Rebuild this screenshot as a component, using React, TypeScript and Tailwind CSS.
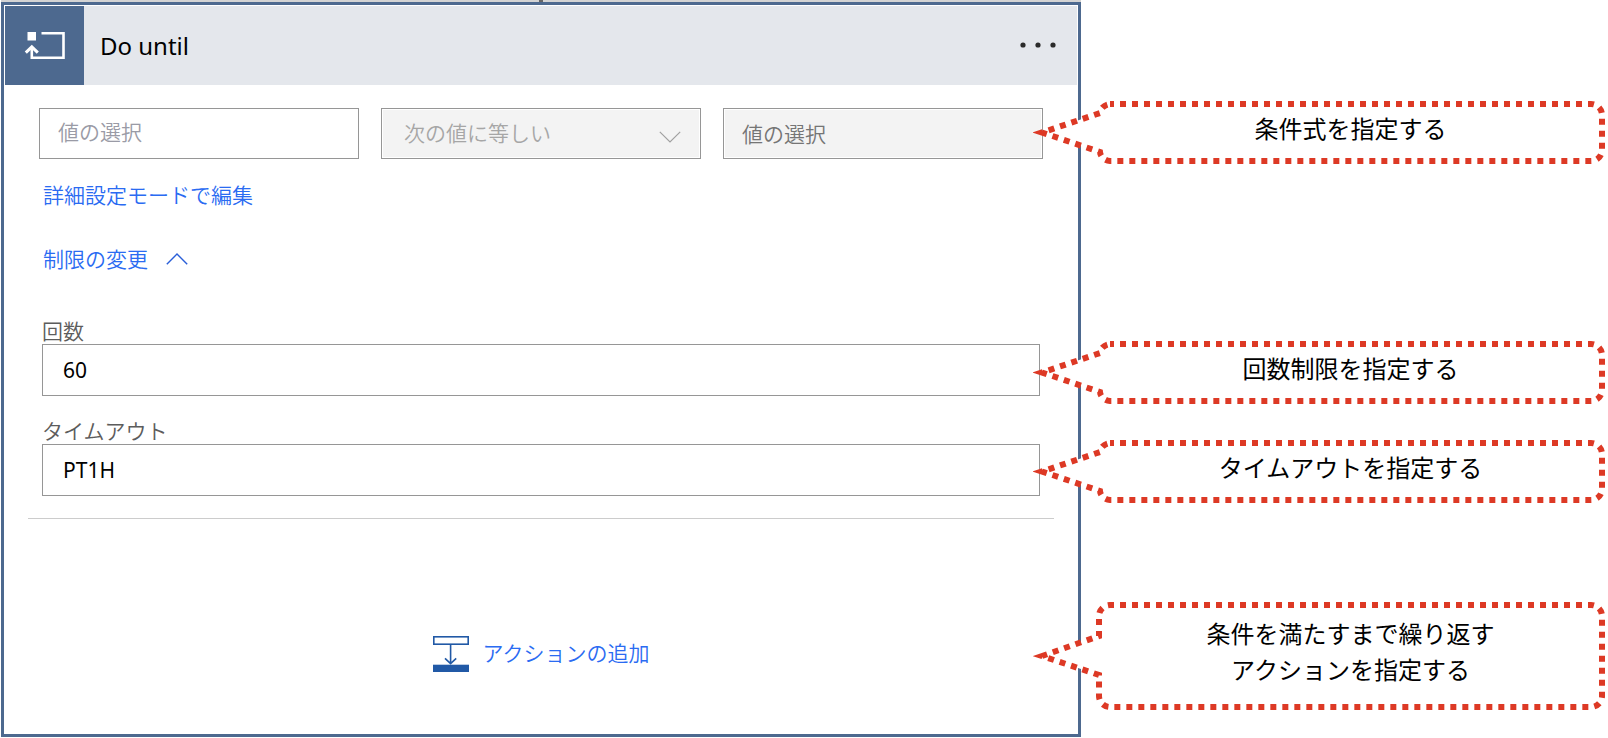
import {useState} from "react";
import type {ReactNode} from "react";
import clsx from "clsx";

type CalloutProps = {
    children: ReactNode;
    path: string;
    viewBox: string;
    className?: string;
};

const SMALL_BOX = "0 0 575 65";
const SMALL_PATH = "M77 4H558A11 11 0 0 1 569 15V50A11 11 0 0 1 558 61H77A11 10 0 0 1 67 52L9 32.5L67 13A11 10 0 0 1 77 4Z";
const LARGE_BOX = "0 0 575 110";
const LARGE_PATH = "M77 4H558A11 11 0 0 1 569 15V95A11 11 0 0 1 558 106H77A11 11 0 0 1 66 95V74L9 55L66 35V15A11 11 0 0 1 77 4Z";

function Callout({children, path, viewBox, className}: CalloutProps) {
    return (
        <div className={clsx("-ml-12 grid", className)}>
            <svg viewBox={viewBox} preserveAspectRatio="none" className="col-start-1 row-start-1 h-full w-full" aria-hidden="true">
                <path d={path} fill="#fff" stroke="#dd3925" strokeWidth="6" strokeDasharray="6 6" strokeDashoffset="2" strokeMiterlimit="10"/>
            </svg>
            <p className="col-start-1 row-start-1 self-center pr-1.5 pb-2 pl-[66px] text-center text-2xl leading-9 text-black">
                {children}
            </p>
        </div>
    )
}

function LoopIcon() {
    return (
        <svg viewBox="0 0 79 79" className="h-full w-full" fill="none" stroke="#fff" strokeWidth="2.6" aria-hidden="true">
            <rect x="22.5" y="26" width="8.5" height="8.5" fill="#fff" stroke="none"/>
            <path d="M36.5 27.3H58.5V51.7H26.8V41"/>
            <path d="M20.8 46.6L26.8 40.8L32.8 46.6" strokeWidth="3"/>
        </svg>
    )
}

function AddActionIcon() {
    return (
        <svg viewBox="0 0 36 36" className="size-9" fill="none" stroke="#2159a6" aria-hidden="true">
            <rect x="0.8" y="0.8" width="34.4" height="7.4" strokeWidth="1.6"/>
            <path d="M17.6 8.5V27.5M12 22.3L17.6 27.6L23.2 22.3" strokeWidth="1.6"/>
            <rect y="28.7" width="36" height="7.3" fill="#2159a6" stroke="none"/>
        </svg>
    )
}

export default function App() {
    const [left, setLeft] = useState("");
    const [count, setCount] = useState("60");
    const [timeout, setTimeoutValue] = useState("PT1H");
    const [showLimits, setShowLimits] = useState(true);

    return (
        <div className="flex bg-white font-['Noto_Sans','Noto_Sans_CJK_JP',sans-serif] text-[21px]">
            <main className="min-w-0 flex-1 pl-px">
                {/* tail of the connector from the previous step */}
                <div className="flex h-0.5 justify-center bg-[#d3d3d3]">
                    <span className="w-1 bg-[#666]"/>
                </div>

                <section className="border-3 border-[#4d698f] p-px shadow-[0_1px_0_#d5dae2]">
                    <header className="flex h-[79px] items-center bg-[#e4e7ec]">
                        <div className="size-[79px] bg-[#4d698f]">
                            <LoopIcon/>
                        </div>
                        <h1 className="flex-1 pl-4 text-2xl text-black">Do until</h1>
                        <button type="button" aria-label="メニュー" className="mr-5">
                            <svg viewBox="0 0 40 16" className="h-4 w-10" fill="#2b2b2b" aria-hidden="true">
                                <circle cx="6" cy="7" r="2.6"/>
                                <circle cx="21" cy="7" r="2.6"/>
                                <circle cx="36" cy="7" r="2.6"/>
                            </svg>
                        </button>
                    </header>

                    <div className="px-[34px] pt-[23px]">
                        <div className="grid grid-cols-3 gap-[22px]">
                            <input type="text" aria-label="左辺の値" value={left} onChange={(e) => setLeft(e.target.value)}
                                   placeholder="値の選択"
                                   className="h-[51px] w-full min-w-0 border border-[#969696] px-[18px] pb-1 font-[350] placeholder:text-[#9a9ba6]"
                            />
                            <div className="grid">
                                <select disabled aria-label="条件"
                                        className="col-start-1 row-start-1 h-[51px] w-full min-w-0 appearance-none border border-[#969696] bg-[#f3f3f3] px-[22px] font-[350] text-[#a6a6a6] opacity-100 shadow-[inset_0_0_0_1px_#fff]">
                                    <option>次の値に等しい</option>
                                </select>
                                <svg viewBox="0 0 22 12" className="pointer-events-none col-start-1 row-start-1 mr-5 mt-1.5 h-3 w-[22px] self-center justify-self-end"
                                     fill="none" stroke="#a0a0a0" strokeWidth="1.2" aria-hidden="true">
                                    <path d="M0.8 0.8L11 11L21.2 0.8"/>
                                </svg>
                            </div>
                            <input type="text" disabled aria-label="右辺の値" placeholder="値の選択"
                                   className="h-[51px] w-full min-w-0 border border-[#969696] bg-[#f3f3f3] px-[18px] font-[350] shadow-[inset_0_0_0_1px_#fff] placeholder:text-[#757575]"
                            />
                        </div>

                        <div className="mt-5 flex flex-col items-start gap-8 pl-1 font-[350] text-[#2a6bf2]">
                            <a href="#advanced" className="leading-8">詳細設定モードで編集</a>
                            <button type="button" aria-expanded={showLimits} onClick={() => setShowLimits(!showLimits)}
                                    className="flex items-center gap-[18px] leading-8">
                                制限の変更
                                <svg viewBox="0 0 22 12" className={clsx("h-3 w-[22px]", !showLimits && "rotate-180")}
                                     fill="none" stroke="#2a5fd8" strokeWidth="1.4" aria-hidden="true">
                                    <path d="M0.8 11.2L11 1L21.2 11.2"/>
                                </svg>
                            </button>
                        </div>

                        {showLimits && (
                            <div className="mt-11 flex flex-col gap-[23px] px-[3px]">
                                <div>
                                    <label htmlFor="count" className="mb-px block leading-6 font-[350] text-[#5c5c5c]">回数</label>
                                    <input id="count" type="text" value={count} onChange={(e) => setCount(e.target.value)}
                                           className="block h-[52px] w-full border border-[#969696] px-5 text-black"
                                    />
                                </div>
                                <div>
                                    <label htmlFor="timeout" className="mb-px block leading-6 font-[350] text-[#5c5c5c]">タイムアウト</label>
                                    <input id="timeout" type="text" value={timeout} onChange={(e) => setTimeoutValue(e.target.value)}
                                           className="block h-[52px] w-full border border-[#969696] px-5 text-black"
                                    />
                                </div>
                            </div>
                        )}
                    </div>

                    <hr className="mx-[23px] mt-[22px] border-[#cccccc]"/>

                    <div className="flex justify-center pt-[117px] pb-[61px]">
                        <button type="button" className="flex h-9 items-center gap-3.5 font-[350] text-[#2a6bf2]">
                            <AddActionIcon/>
                            アクションの追加
                        </button>
                    </div>
                </section>
            </main>

            <aside className="w-[527px] shrink-0 pt-[100px]">
                <Callout viewBox={SMALL_BOX} path={SMALL_PATH} className="h-[65px]">条件式を指定する</Callout>
                <Callout viewBox={SMALL_BOX} path={SMALL_PATH} className="mt-[175px] h-[65px]">回数制限を指定する</Callout>
                <Callout viewBox={SMALL_BOX} path={SMALL_PATH} className="mt-[34px] h-[65px]">タイムアウトを指定する</Callout>
                <Callout viewBox={LARGE_BOX} path={LARGE_PATH} className="mt-[97px] h-[110px]">
                    条件を満たすまで繰り返す<br/>アクションを指定する
                </Callout>
            </aside>
        </div>
    )
}
